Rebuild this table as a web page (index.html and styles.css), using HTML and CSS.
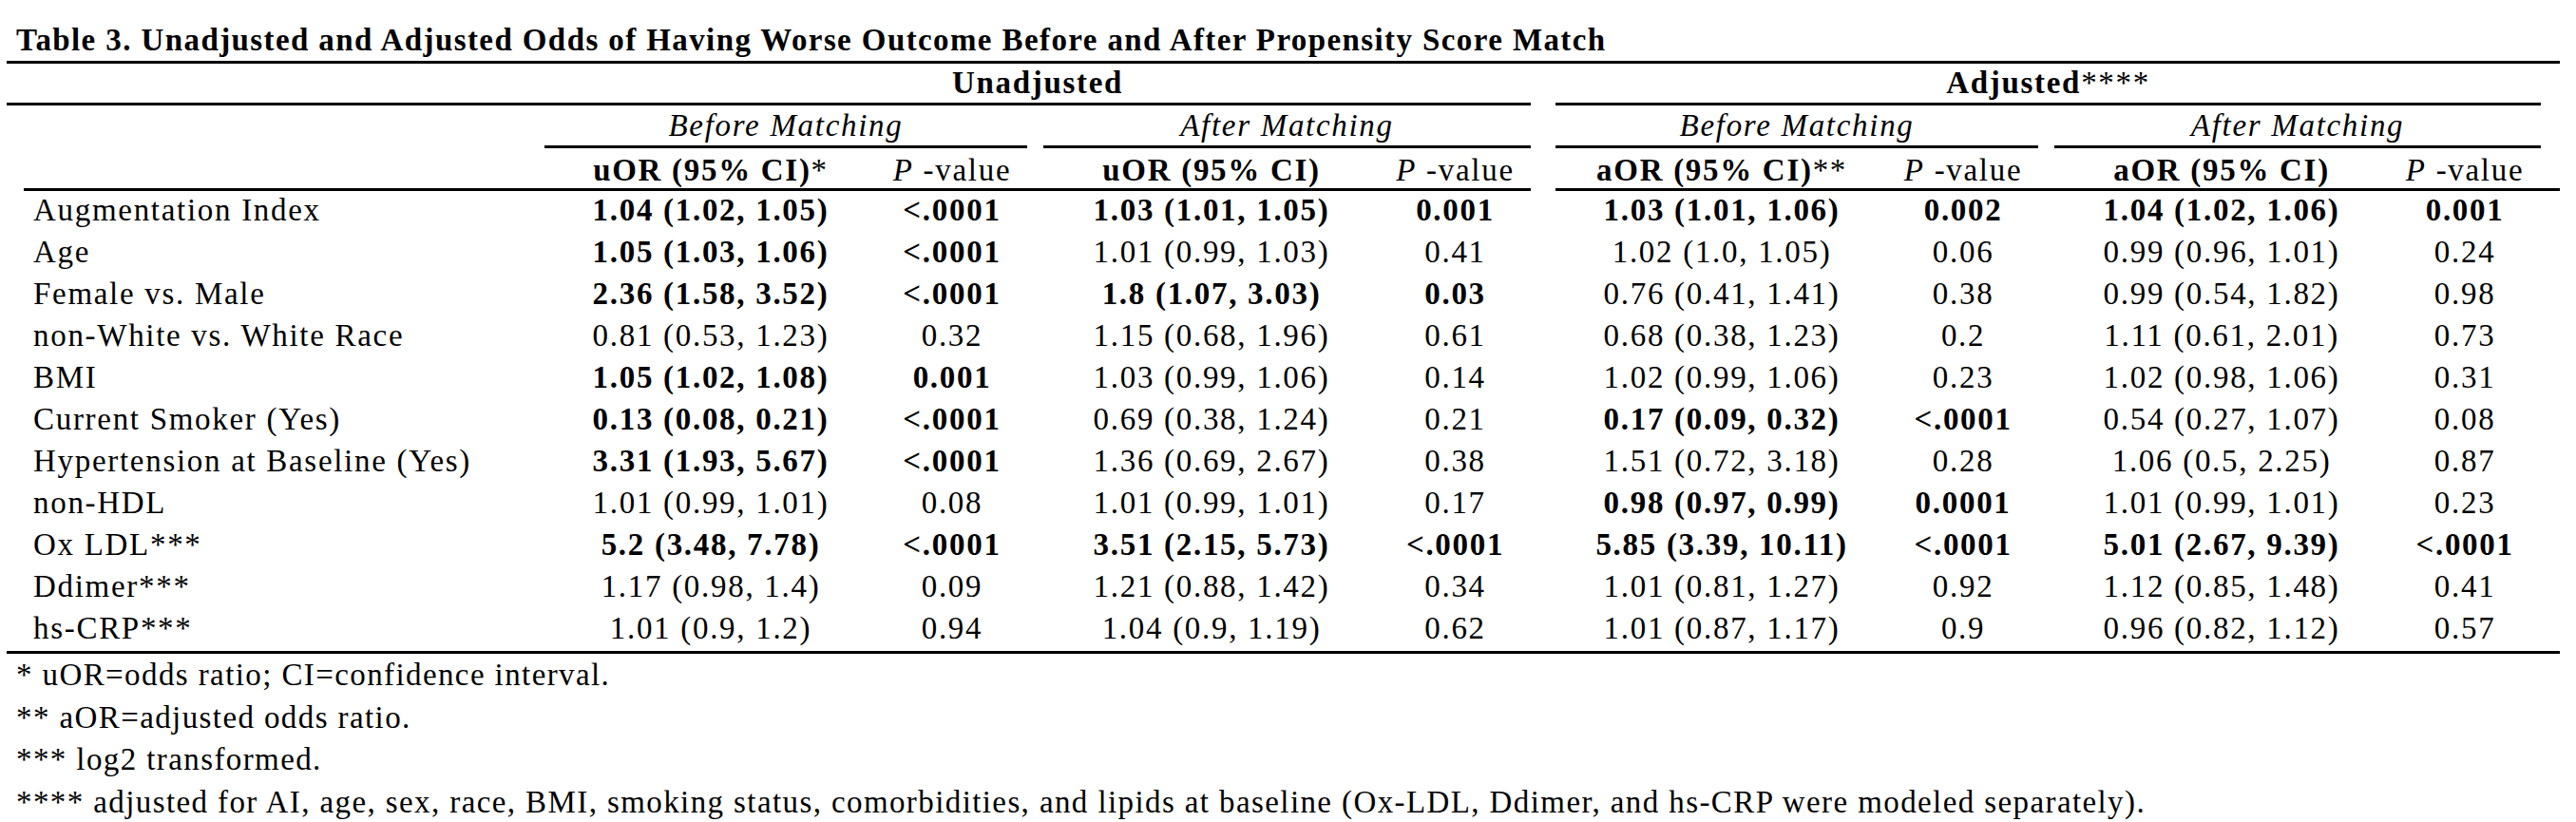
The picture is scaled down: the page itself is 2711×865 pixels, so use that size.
FILE: index.html
```html
<!DOCTYPE html>
<html lang="en">
<head>
<meta charset="utf-8">
<title>Table 3</title>
<link rel="stylesheet" href="styles.css">
</head>
<body>
<div class="page">
  <div class="caption">Table 3. Unadjusted and Adjusted Odds of Having Worse Outcome Before and After Propensity Score Match</div>
  <table class="odds">
    <colgroup>
      <col class="c-pad"><col class="c-label"><col class="c-gap">
      <col class="c-or1"><col class="c-p1"><col class="c-gap">
      <col class="c-or2"><col class="c-p2"><col class="c-gap-wide">
      <col class="c-or3"><col class="c-p3"><col class="c-gap">
      <col class="c-or4"><col class="c-p4"><col class="c-end">
    </colgroup>
    <thead>
      <tr class="h1">
        <th class="rule"></th><th class="rule"></th><th class="rule"></th>
        <th class="rule group" colspan="5">Unadjusted</th>
        <th></th>
        <th class="rule group" colspan="5">Adjusted<span class="mark">****</span></th>
        <th></th>
      </tr>
      <tr class="h2">
        <th></th><th></th><th></th>
        <th class="rule sub" colspan="2">Before Matching</th>
        <th></th>
        <th class="rule sub" colspan="2">After Matching</th>
        <th></th>
        <th class="rule sub" colspan="2">Before Matching</th>
        <th></th>
        <th class="rule sub" colspan="2">After Matching</th>
        <th></th>
      </tr>
      <tr class="h3">
        <th></th><th class="rule"></th><th class="rule"></th>
        <th class="rule est">uOR (95% CI)<span class="mark">*</span></th>
        <th class="rule pv"><i>P</i> -value</th>
        <th class="rule"></th>
        <th class="rule est">uOR (95% CI)</th>
        <th class="rule pv"><i>P</i> -value</th>
        <th></th>
        <th class="rule est">aOR (95% CI)<span class="mark">**</span></th>
        <th class="rule pv"><i>P</i> -value</th>
        <th class="rule"></th>
        <th class="rule est">aOR (95% CI)</th>
        <th class="rule pv"><i>P</i> -value</th>
        <th class="rule"></th>
      </tr>
    </thead>
    <tbody>
      <tr>
        <td class="label" colspan="2">Augmentation Index</td><td></td>
        <td class="b">1.04 (1.02, 1.05)</td><td class="b">&lt;.0001</td><td></td>
        <td class="b">1.03 (1.01, 1.05)</td><td class="b">0.001</td><td></td>
        <td class="b">1.03 (1.01, 1.06)</td><td class="b">0.002</td><td></td>
        <td class="b">1.04 (1.02, 1.06)</td><td class="b">0.001</td><td></td>
      </tr>
      <tr>
        <td class="label" colspan="2">Age</td><td></td>
        <td class="b">1.05 (1.03, 1.06)</td><td class="b">&lt;.0001</td><td></td>
        <td>1.01 (0.99, 1.03)</td><td>0.41</td><td></td>
        <td>1.02 (1.0, 1.05)</td><td>0.06</td><td></td>
        <td>0.99 (0.96, 1.01)</td><td>0.24</td><td></td>
      </tr>
      <tr>
        <td class="label" colspan="2">Female vs. Male</td><td></td>
        <td class="b">2.36 (1.58, 3.52)</td><td class="b">&lt;.0001</td><td></td>
        <td class="b">1.8 (1.07, 3.03)</td><td class="b">0.03</td><td></td>
        <td>0.76 (0.41, 1.41)</td><td>0.38</td><td></td>
        <td>0.99 (0.54, 1.82)</td><td>0.98</td><td></td>
      </tr>
      <tr>
        <td class="label" colspan="2">non-White vs. White Race</td><td></td>
        <td>0.81 (0.53, 1.23)</td><td>0.32</td><td></td>
        <td>1.15 (0.68, 1.96)</td><td>0.61</td><td></td>
        <td>0.68 (0.38, 1.23)</td><td>0.2</td><td></td>
        <td>1.11 (0.61, 2.01)</td><td>0.73</td><td></td>
      </tr>
      <tr>
        <td class="label" colspan="2">BMI</td><td></td>
        <td class="b">1.05 (1.02, 1.08)</td><td class="b">0.001</td><td></td>
        <td>1.03 (0.99, 1.06)</td><td>0.14</td><td></td>
        <td>1.02 (0.99, 1.06)</td><td>0.23</td><td></td>
        <td>1.02 (0.98, 1.06)</td><td>0.31</td><td></td>
      </tr>
      <tr>
        <td class="label" colspan="2">Current Smoker (Yes)</td><td></td>
        <td class="b">0.13 (0.08, 0.21)</td><td class="b">&lt;.0001</td><td></td>
        <td>0.69 (0.38, 1.24)</td><td>0.21</td><td></td>
        <td class="b">0.17 (0.09, 0.32)</td><td class="b">&lt;.0001</td><td></td>
        <td>0.54 (0.27, 1.07)</td><td>0.08</td><td></td>
      </tr>
      <tr>
        <td class="label" colspan="2">Hypertension at Baseline (Yes)</td><td></td>
        <td class="b">3.31 (1.93, 5.67)</td><td class="b">&lt;.0001</td><td></td>
        <td>1.36 (0.69, 2.67)</td><td>0.38</td><td></td>
        <td>1.51 (0.72, 3.18)</td><td>0.28</td><td></td>
        <td>1.06 (0.5, 2.25)</td><td>0.87</td><td></td>
      </tr>
      <tr>
        <td class="label" colspan="2">non-HDL</td><td></td>
        <td>1.01 (0.99, 1.01)</td><td>0.08</td><td></td>
        <td>1.01 (0.99, 1.01)</td><td>0.17</td><td></td>
        <td class="b">0.98 (0.97, 0.99)</td><td class="b">0.0001</td><td></td>
        <td>1.01 (0.99, 1.01)</td><td>0.23</td><td></td>
      </tr>
      <tr>
        <td class="label" colspan="2">Ox LDL***</td><td></td>
        <td class="b">5.2 (3.48, 7.78)</td><td class="b">&lt;.0001</td><td></td>
        <td class="b">3.51 (2.15, 5.73)</td><td class="b">&lt;.0001</td><td></td>
        <td class="b">5.85 (3.39, 10.11)</td><td class="b">&lt;.0001</td><td></td>
        <td class="b">5.01 (2.67, 9.39)</td><td class="b">&lt;.0001</td><td></td>
      </tr>
      <tr>
        <td class="label" colspan="2">Ddimer***</td><td></td>
        <td>1.17 (0.98, 1.4)</td><td>0.09</td><td></td>
        <td>1.21 (0.88, 1.42)</td><td>0.34</td><td></td>
        <td>1.01 (0.81, 1.27)</td><td>0.92</td><td></td>
        <td>1.12 (0.85, 1.48)</td><td>0.41</td><td></td>
      </tr>
      <tr>
        <td class="label" colspan="2">hs-CRP***</td><td></td>
        <td>1.01 (0.9, 1.2)</td><td>0.94</td><td></td>
        <td>1.04 (0.9, 1.19)</td><td>0.62</td><td></td>
        <td>1.01 (0.87, 1.17)</td><td>0.9</td><td></td>
        <td>0.96 (0.82, 1.12)</td><td>0.57</td><td></td>
      </tr>
    </tbody>
  </table>
  <div class="notes">
    <p>* uOR=odds ratio; CI=confidence interval.</p>
    <p>** aOR=adjusted odds ratio.</p>
    <p>*** log2 transformed.</p>
    <p>**** adjusted for AI, age, sex, race, BMI, smoking status, comorbidities, and lipids at baseline (Ox-LDL, Ddimer, and hs-CRP were modeled separately).</p>
  </div>
</div>
</body>
</html>
```

FILE: styles.css
```css
html, body {
  margin: 0;
  padding: 0;
  background: #ffffff;
}

.page {
  padding: 22px 0 0 7px;
  font-family: "Liberation Serif", "Times New Roman", serif;
  font-size: 33px;
  letter-spacing: 1.7px;
  color: #000000;
}

.caption {
  font-weight: bold;
  letter-spacing: 1.4px;
  line-height: 40px;
  height: 40px;
  margin: 0 0 2px 10px;
  white-space: nowrap;
}

.odds {
  width: 2687px;
  table-layout: fixed;
  border-collapse: separate;
  border-spacing: 0;
  border-top: 3px solid #000;
  border-bottom: 3px solid #000;
}

.c-pad { width: 18px; }
.c-label { width: 531px; }
.c-gap { width: 17px; }
.c-gap-wide { width: 26px; }
.c-or1 { width: 350px; }
.c-p1 { width: 158px; }
.c-or2 { width: 354px; }
.c-p2 { width: 159px; }
.c-or3 { width: 350px; }
.c-p3 { width: 158px; }
.c-or4 { width: 352px; }
.c-p4 { width: 160px; }
.c-end { width: 20px; }

.odds th,
.odds td {
  padding: 0;
  text-align: center;
  vertical-align: top;
  white-space: nowrap;
}

.odds th {
  font-weight: bold;
}

.odds th.rule {
  border-bottom: 3px solid #000;
}

.h1 th {
  line-height: 41px;
  height: 41px;
}

.h2 th {
  line-height: 42px;
  height: 42px;
}

.h2 th.sub {
  font-weight: normal;
  font-style: italic;
}

.h3 th {
  line-height: 38px;
  height: 38px;
  padding-top: 4px;
}

.h3 th.pv {
  font-weight: normal;
}

.mark {
  font-weight: normal;
}

.odds td {
  line-height: 40px;
  height: 40px;
  padding-bottom: 4px;
}

.odds td.label {
  text-align: left;
  padding-left: 28px;
}

.odds td.b {
  font-weight: bold;
}

.notes {
  padding-left: 10px;
  letter-spacing: 1.4px;
}

.notes p {
  margin: 0;
  line-height: 44.5px;
  white-space: nowrap;
}
```
